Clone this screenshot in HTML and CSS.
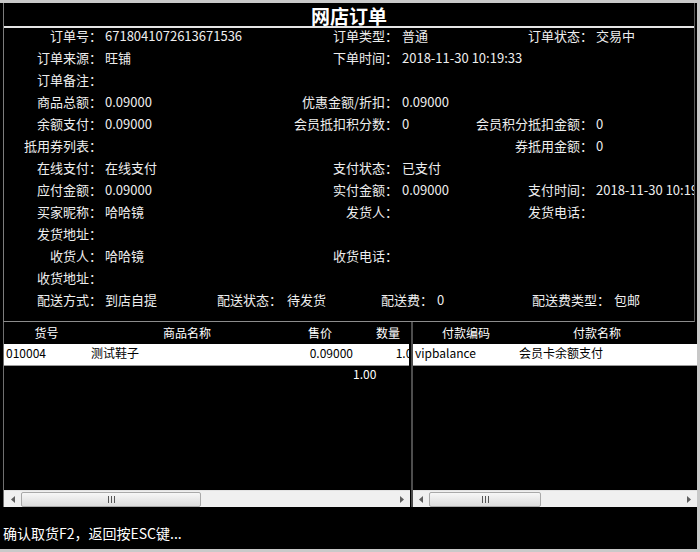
FILE: index.html
```html
<!DOCTYPE html>
<html lang="zh-CN">
<head>
<meta charset="utf-8">
<title>网店订单</title>
<link rel="stylesheet" href="styles.css">
</head>
<body>
<div class="win">
  <div class="head">
    <div class="title">网店订单</div>
    <div class="info">
      <div class="row">
        <span class="l">订单号：</span><span class="v">6718041072613671536</span>
        <span class="l l2">订单类型：</span><span class="v">普通</span>
        <span class="l">订单状态：</span><span class="v">交易中</span>
      </div>
      <div class="row">
        <span class="l">订单来源：</span><span class="v">旺铺</span>
        <span class="l l2">下单时间：</span><span class="v">2018-11-30 10:19:33</span>
        <span class="l"></span><span class="v"></span>
      </div>
      <div class="row">
        <span class="l">订单备注：</span><span class="v"></span>
      </div>
      <div class="row">
        <span class="l">商品总额：</span><span class="v">0.09000</span>
        <span class="l l2">优惠金额/折扣：</span><span class="v">0.09000</span>
      </div>
      <div class="row">
        <span class="l">余额支付：</span><span class="v">0.09000</span>
        <span class="l l2">会员抵扣积分数：</span><span class="v">0</span>
        <span class="l">会员积分抵扣金额：</span><span class="v">0</span>
      </div>
      <div class="row">
        <span class="l">抵用券列表：</span><span class="v"></span>
        <span class="l l2"></span><span class="v"></span>
        <span class="l">券抵用金额：</span><span class="v">0</span>
      </div>
      <div class="row">
        <span class="l">在线支付：</span><span class="v">在线支付</span>
        <span class="l l2">支付状态：</span><span class="v">已支付</span>
      </div>
      <div class="row">
        <span class="l">应付金额：</span><span class="v">0.09000</span>
        <span class="l l2">实付金额：</span><span class="v">0.09000</span>
        <span class="l">支付时间：</span><span class="v cut">2018-11-30 10:19:33</span>
      </div>
      <div class="row">
        <span class="l">买家昵称：</span><span class="v">哈哈镜</span>
        <span class="l l2">发货人：</span><span class="v"></span>
        <span class="l">发货电话：</span><span class="v"></span>
      </div>
      <div class="row">
        <span class="l">发货地址：</span><span class="v"></span>
      </div>
      <div class="row">
        <span class="l">收货人：</span><span class="v">哈哈镜</span>
        <span class="l l2">收货电话：</span><span class="v"></span>
      </div>
      <div class="row">
        <span class="l">收货地址：</span><span class="v"></span>
      </div>
      <div class="row last">
        <span class="l">配送方式：</span><span class="v">到店自提</span>
        <span>配送状态：</span><span>待发货</span>
        <span>配送费：</span><span>0</span>
        <span>配送费类型：</span><span>包邮</span>
      </div>
    </div>
  </div>

  <div class="grids">
    <div class="lt">
      <div class="th">
        <span class="c1">货号</span><span class="c2">商品名称</span><span class="c3">售价</span><span class="c4">数量</span>
      </div>
      <div class="tbody">
        <div class="tr">
          <span class="c1 left">010004</span><span class="c2 left">测试鞋子</span><span class="c3 right">0.09000</span><span class="c4 clip"><span class="in">1.00</span></span>
        </div>
        <div class="tf">
          <span class="c1"></span><span class="c2"></span><span class="c3"></span><span class="c4 sum">1.00</span>
        </div>
      </div>
      <div class="sb">
        <span class="arr"><svg width="4" height="7" viewBox="0 0 4 7"><path d="M4 0V7L0 3.5Z" fill="#5e5e5e"/></svg></span>
        <span class="thumb t1"><span class="grip"></span></span>
        <span class="track"></span>
        <span class="arr"><svg width="4" height="7" viewBox="0 0 4 7"><path d="M0 0V7L4 3.5Z" fill="#5e5e5e"/></svg></span>
      </div>
    </div>
    <div class="sep"></div>
    <div class="rt">
      <div class="th">
        <span class="p1">付款编码</span><span class="p2">付款名称</span>
      </div>
      <div class="tbody">
        <div class="tr full">
          <span class="p1 left">vipbalance</span><span class="p2 left nopad">会员卡余额支付</span>
        </div>
      </div>
      <div class="sb">
        <span class="arr a2"><svg width="4" height="7" viewBox="0 0 4 7"><path d="M4 0V7L0 3.5Z" fill="#5e5e5e"/></svg></span>
        <span class="thumb t2"><span class="grip"></span></span>
        <span class="track"></span>
        <span class="arr a2"><svg width="4" height="7" viewBox="0 0 4 7"><path d="M0 0V7L4 3.5Z" fill="#5e5e5e"/></svg></span>
      </div>
    </div>
  </div>

  <div class="status">确认取货F2，返回按ESC键...</div>
</div>
</body>
</html>
```

FILE: styles.css
```css
* { box-sizing: border-box; }

html, body {
  margin: 0;
  padding: 0;
  background: #000;
}

body {
  font-family: "Noto Sans CJK SC", "Noto Sans", sans-serif;
  color: #eeeeee;
}

.win {
  width: 700px;
  height: 552px;
  border-top: 3px solid #c9c9c9;
  border-right: 3px solid #c9c9c9;
  border-bottom: 3px solid #c9c9c9;
  padding-left: 3px;
  display: flex;
  flex-direction: column;
  overflow: hidden;
  background: #000;
}

/* ---------- header + info ---------- */
.head {
  margin-right: 2px;
  border-left: 1px solid #7c7c7c;
  border-right: 1px solid #5a5a5a;
  border-bottom: 1px solid #8c8c8c;
  flex: none;
}

.title {
  height: 25px;
  line-height: 25px;
  text-align: center;
  font-size: 19px;
  font-weight: bold;
  color: #fff;
  border-bottom: 2px solid #e4e4e4;
}

.info {
  height: 293px;
  padding-top: 0;
  display: flex;
  flex-direction: column;
  gap: 6px;
  font-size: 13px;
}

.row {
  display: grid;
  grid-template-columns: 101px 145px 152px 68px 126px 98px;
  height: 16px;
  line-height: 16px;
  white-space: nowrap;
}

.row .cut {
  clip-path: inset(-4px 0 -4px 0);
}

.row.last {
  grid-template-columns: 101px 112px 70px 94px 56px 95px 82px 80px;
}

.l {
  text-align: right;
  padding-right: 3px;
}

.l.l2 {
  padding-right: 4px;
}

/* ---------- tables ---------- */
.grids {
  display: flex;
  height: 185px;
  flex: none;
}

.lt {
  width: 407px;
  flex: none;
  border-left: 1px solid #6f6f6f;
  display: flex;
  flex-direction: column;
  overflow: hidden;
}

.sep {
  width: 2px;
  margin-left: 1px;
  background: #4d4d4d;
  flex: none;
}

.rt {
  flex: 1;
  min-width: 0;
  display: flex;
  flex-direction: column;
  overflow: hidden;
}

.th, .tr, .tf {
  display: flex;
  white-space: nowrap;
  font-size: 12px;
  flex: none;
}

.th span, .tr span, .tf span {
  flex: none;
  display: block;
}

.th {
  height: 22px;
  line-height: 22px;
  color: #fff;
  text-align: center;
}

.tbody {
  flex: 1;
}

.tr {
  height: 22px;
  line-height: 18px;
  background: #fff;
  color: #000;
  margin-right: 1px;
  overflow: hidden;
  border-bottom: 1px solid #9a9a9a;
}

.tr.full {
  margin-right: 0;
}

.tf {
  height: 16px;
  line-height: 16px;
  color: #fff;
}

.c1 { width: 85px; }
.c2 { width: 196px; }
.c3 { width: 70px; }
.c4 { width: 66px; }
.p1 { width: 106px; }
.p2 { width: 156px; }

.tr .c4.clip {
  width: 54px;
  overflow: hidden;
}

.tr .c4 .in {
  width: 64px;
  text-align: right;
}

.left { text-align: left; padding-left: 2px; }
.left.nopad { padding-left: 0; }
.right { text-align: right; padding-right: 2px; }
.sum { margin-left: -2px; }

/* ---------- scrollbars ---------- */
.sb {
  height: 17px;
  flex: none;
  display: flex;
  align-items: center;
  background: #f0f0f0;
  border-top: 1px solid #e2e2e2;
}

.arr {
  width: 17px;
  height: 15px;
  flex: none;
  display: flex;
  align-items: center;
  justify-content: center;
}

.arr.a2 {
  width: 16px;
}

.thumb {
  height: 15px;
  flex: none;
  border: 1px solid #a9a9a9;
  border-radius: 2px;
  background: linear-gradient(#f7f7f7, #dcdcdc);
  display: flex;
  align-items: center;
  justify-content: center;
}

.t1 { width: 180px; }
.t2 { width: 112px; }

.grip {
  width: 7px;
  height: 7px;
  background: repeating-linear-gradient(to right, #555 0 1px, transparent 1px 3px);
}

.track {
  flex: 1;
}

/* ---------- status ---------- */
.status {
  flex: 1;
  padding-top: 16px;
  line-height: 20px;
  font-size: 14px;
  color: #fff;
  white-space: nowrap;
}
```
